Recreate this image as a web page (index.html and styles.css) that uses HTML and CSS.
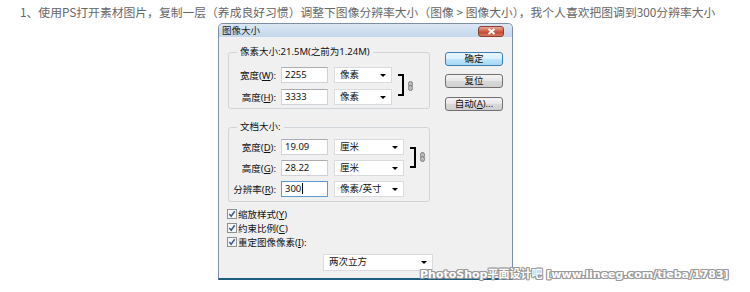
FILE: index.html
```html
<!DOCTYPE html>
<html lang="zh-CN">
<head>
    <meta charset="UTF-8">
    <meta name="viewport" content="width=device-width, initial-scale=1.0">
    <title>图像大小</title>
    <link rel="stylesheet" href="styles.css">
</head>
<body>
    <p class="intro">1、使用PS打开素材图片，复制一层（养成良好习惯）调整下图像分辨率大小（图像 &gt; 图像大小），我个人喜欢把图调到300分辨率大小</p>

    <div class="dialog">
        <div class="titlebar">
            <span class="title">图像大小</span>
            <span class="close">
                <svg width="9" height="7" viewBox="0 0 9 7"><path d="M1.5 1 L7.5 6 M7.5 1 L1.5 6" stroke="#fff" stroke-width="2"/></svg>
            </span>
        </div>
        <div class="dlg-body">
            <div class="main-col">
                <fieldset class="group pixel">
                    <legend>像素大小:21.5M(之前为1.24M)</legend>
                    <div class="linked">
                        <div class="rows">
                            <div class="row">
                                <label>宽度(<u>W</u>):</label>
                                <span class="field">2255</span>
                                <span class="combo">像素</span>
                            </div>
                            <div class="row">
                                <label>高度(<u>H</u>):</label>
                                <span class="field">3333</span>
                                <span class="combo">像素</span>
                            </div>
                        </div>
                        <span class="bracket"></span>
                        <svg class="chain" width="5" height="10" viewBox="0 0 5 10"><rect x="0.5" y="0.5" width="4" height="5" rx="2" fill="#bbb" stroke="#7d7d7d"/><rect x="0.5" y="4.5" width="4" height="5" rx="2" fill="#bbb" stroke="#7d7d7d"/></svg>
                    </div>
                </fieldset>

                <fieldset class="group doc">
                    <legend>文档大小:</legend>
                    <div class="linked">
                        <div class="rows">
                            <div class="row">
                                <label>宽度(<u>D</u>):</label>
                                <span class="field">19.09</span>
                                <span class="combo">厘米</span>
                            </div>
                            <div class="row">
                                <label>高度(<u>G</u>):</label>
                                <span class="field">28.22</span>
                                <span class="combo">厘米</span>
                            </div>
                        </div>
                        <span class="bracket"></span>
                        <svg class="chain" width="5" height="10" viewBox="0 0 5 10"><rect x="0.5" y="0.5" width="4" height="5" rx="2" fill="#bbb" stroke="#7d7d7d"/><rect x="0.5" y="4.5" width="4" height="5" rx="2" fill="#bbb" stroke="#7d7d7d"/></svg>
                    </div>
                    <div class="row res">
                        <label>分辨率(<u>R</u>):</label>
                        <span class="field focus">300<i class="caret"></i></span>
                        <span class="combo">像素/英寸</span>
                    </div>
                </fieldset>

                <div class="checks">
                    <div class="check">
                        <svg width="10" height="10" viewBox="0 0 10 10"><rect x="0.5" y="0.5" width="9" height="9" fill="#f6f6f6" stroke="#8e8f8f"/><path d="M2.3 5 L4.2 7.2 L7.7 2.3" stroke="#3c5a99" stroke-width="1.5" fill="none"/></svg>
                        <span>缩放样式(<u>Y</u>)</span>
                    </div>
                    <div class="check">
                        <svg width="10" height="10" viewBox="0 0 10 10"><rect x="0.5" y="0.5" width="9" height="9" fill="#f6f6f6" stroke="#8e8f8f"/><path d="M2.3 5 L4.2 7.2 L7.7 2.3" stroke="#3c5a99" stroke-width="1.5" fill="none"/></svg>
                        <span>约束比例(<u>C</u>)</span>
                    </div>
                    <div class="check">
                        <svg width="10" height="10" viewBox="0 0 10 10"><rect x="0.5" y="0.5" width="9" height="9" fill="#f6f6f6" stroke="#8e8f8f"/><path d="M2.3 5 L4.2 7.2 L7.7 2.3" stroke="#3c5a99" stroke-width="1.5" fill="none"/></svg>
                        <span>重定图像像素(<u>I</u>):</span>
                    </div>
                </div>

                <span class="combo resample">两次立方</span>
            </div>

            <div class="buttons">
                <span class="btn default">确定</span>
                <span class="btn">复位</span>
                <span class="btn">自动(<u>A</u>)...</span>
            </div>
        </div>
    </div>

    <div class="watermark">PhotoShop平面设计吧 [www.lineeg.com/tieba/1783]</div>
</body>
</html>
```

FILE: styles.css
```css
body {
    margin: 0;
    background: #fff;
    font-family: "Noto Sans", "Noto Sans CJK SC", sans-serif;
}
.intro {
    margin: 0;
    padding: 4px 0 0 20px;
    font-family: "Noto Sans CJK SC", sans-serif;
    font-size: 11.8px;
    line-height: 16px;
    color: #666;
    white-space: nowrap;
}
.dialog {
    margin: 3px 0 0 218px;
    width: 295px;
    height: 257px;
    box-sizing: border-box;
    border: 1px solid #7d8fa3;
    border-bottom: 2px solid #1f5d7e;
    border-radius: 5px 5px 0 0;
    background: #f0f0f0;
    font-size: 9.5px;
    color: #111;
}
.titlebar {
    height: 13px;
    display: flex;
    align-items: center;
    padding-left: 3px;
    border-radius: 4px 4px 0 0;
    background: linear-gradient(#dbe7f4, #c4d7ec);
}
.title {
    font-family: "Noto Sans CJK SC", sans-serif;
    font-size: 9.5px;
    line-height: 13px;
    color: #1a1a1a;
}
.close {
    margin-left: auto;
    margin-right: 8px;
    margin-top: 2px;
    width: 26px;
    height: 11px;
    box-sizing: border-box;
    border: 1px solid #8a3d31;
    border-radius: 3px;
    background: linear-gradient(#e9a99a, #cf5b45 50%, #c2422c 51%, #d77a5f);
    display: flex;
    align-items: center;
    justify-content: center;
}
.dlg-body {
    display: flex;
    padding: 8px 0 0 9px;
}
.main-col {
    width: 205px;
}
.group {
    margin: 0;
    padding: 0 0 3px 0;
    width: 202px;
    box-sizing: border-box;
    border: 1px solid #d0d5da;
    border-radius: 3px;
}
.group legend {
    margin-left: 8px;
    padding: 0 3px;
    line-height: 14px;
    font-size: 9.5px;
}
.linked {
    display: flex;
    align-items: flex-start;
}
.pixel .linked {
    margin-top: 8px;
}
.doc {
    margin-top: 11px;
    padding-bottom: 4px;
}
.doc .linked {
    margin-top: 5px;
}
.row {
    display: flex;
    align-items: center;
    height: 16px;
}
.pixel .row + .row {
    margin-top: 6px;
}
.doc .row + .row,
.row.res {
    margin-top: 5px;
}
.row label {
    width: 47px;
    margin-right: 5px;
    text-align: right;
    white-space: nowrap;
}
.field {
    width: 47px;
    height: 16px;
    margin-right: 6px;
    box-sizing: border-box;
    padding: 0 3px;
    border: 1px solid #cfd3d9;
    border-top-color: #abadb3;
    background: #fff;
    line-height: 14px;
}
.field.focus {
    border-color: #5b9bd5;
}
.caret {
    display: inline-block;
    width: 1px;
    height: 11px;
    margin-left: 1px;
    vertical-align: -2px;
    background: #000;
}
.combo {
    position: relative;
    display: block;
    width: 58px;
    height: 16px;
    box-sizing: border-box;
    padding-left: 5px;
    border: 1px solid #d9dbde;
    background: #fff;
    line-height: 14px;
    white-space: nowrap;
}
.doc .combo {
    width: 70px;
}
.combo::after {
    content: "";
    position: absolute;
    right: 5px;
    top: 6px;
    border-left: 3px solid transparent;
    border-right: 3px solid transparent;
    border-top: 3px solid #000;
}
.bracket {
    display: block;
    width: 6px;
    box-sizing: border-box;
    margin-left: 6px;
    border: 2px solid #000;
    border-left: none;
}
.pixel .bracket {
    margin-top: 7px;
    height: 22px;
}
.doc .bracket {
    margin-top: 8px;
    height: 21px;
}
.chain {
    margin-left: 4px;
}
.pixel .chain {
    margin-top: 14px;
}
.doc .chain {
    margin-top: 13px;
}
.checks {
    margin: 5px 0 0 -1px;
}
.check {
    display: flex;
    align-items: center;
    height: 14px;
    gap: 1px;
    white-space: nowrap;
}
.resample {
    margin: 5px 0 0 95px;
    width: 110px;
    height: 17px;
}
.buttons {
    display: flex;
    flex-direction: column;
    margin-left: 12px;
    padding-top: 7px;
}
.btn {
    display: block;
    width: 58px;
    height: 14px;
    box-sizing: border-box;
    border: 1px solid #707070;
    border-radius: 3px;
    background: linear-gradient(#f4f4f4, #e6e6e6 50%, #d9d9d9 51%, #cfcfcf);
    text-align: center;
    line-height: 12px;
    font-size: 9.5px;
    white-space: nowrap;
}
.btn + .btn {
    margin-top: 8px;
}
.btn:last-child {
    margin-top: 9px;
}
.btn.default {
    border-color: #3c7fb1;
    background: linear-gradient(#eaf6fd, #d9f0fc 50%, #bee6fd 51%, #a7d9f5);
}
.watermark {
    position: absolute;
    left: 420px;
    top: 268px;
    font-family: "DejaVu Sans", "Noto Sans CJK SC", sans-serif;
    font-weight: bold;
    font-size: 11px;
    line-height: 14px;
    color: #fff;
    white-space: nowrap;
    text-shadow: 1px 0 #999, -1px 0 #999, 0 1px #999, 0 -1px #999,
        1px 1px #999, -1px -1px #999, 1px -1px #999, -1px 1px #999;
}
```
